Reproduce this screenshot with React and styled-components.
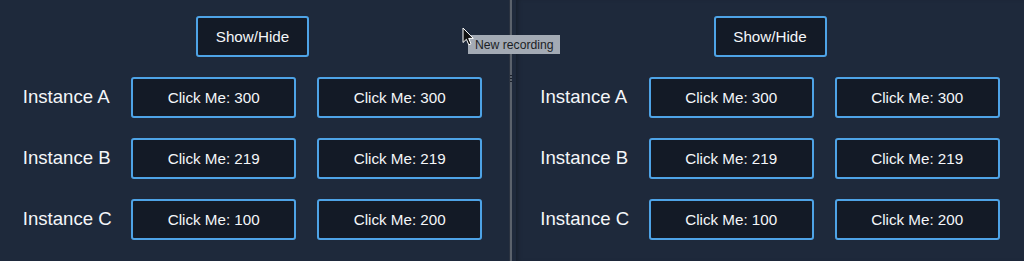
import React from "react";
import styled, { createGlobalStyle } from "styled-components";

const Global = createGlobalStyle`
  html, body { margin: 0; padding: 0; background: #1e293b; }
  body { font-family: "Liberation Sans", Arial, Helvetica, sans-serif; overflow: hidden; }
`;

const Page = styled.div`
  position: relative;
  display: flex;
  width: 1024px;
  height: 261px;
  background: #1e293b;
  overflow: hidden;
`;

const Pane = styled.div`
  flex: 0 0 ${(p) => p.$w}px;
  display: flex;
  flex-direction: column;
  align-items: center;
  padding-top: 16px;
  gap: 20px;
  box-sizing: border-box;
  box-shadow: ${(p) => (p.$shade ? "inset 4px 0 4px -2px rgba(0,0,0,0.25)" : "none")};
`;

const Divider = styled.div`
  flex: 0 0 11px;
  display: flex;
  justify-content: center;
`;

const DividerLine = styled.div`
  position: relative;
  width: 3px;
  height: 100%;
  background: #5b626c;
  border-left: 1px solid #2a3240;
  box-sizing: border-box;
  &::after {
    content: "";
    position: absolute;
    left: 0;
    top: 75px;
    width: 2px;
    height: 8px;
    background: repeating-linear-gradient(
      to bottom,
      #1b212b 0,
      #1b212b 1px,
      #5b626c 1px,
      #5b626c 3px
    );
  }
`;

const Grid = styled.div`
  display: grid;
  grid-template-columns: auto 165px 165px;
  column-gap: 21px;
  row-gap: 20px;
  align-items: center;
`;

const Label = styled.div`
  color: #f4f6f9;
  font-size: 18.6px;
  line-height: 1;
  white-space: nowrap;
  margin-right: -1.5px;
`;

const Button = styled.button`
  width: ${(p) => p.$w}px;
  height: 41px;
  box-sizing: border-box;
  background: #131a26;
  border: 2px solid #4ea3e6;
  border-radius: 3px;
  color: #f4f6f9;
  font-family: "Liberation Sans", Arial, Helvetica, sans-serif;
  font-size: 15.2px;
  padding: 0;
  cursor: pointer;
`;

const Tooltip = styled.div`
  position: absolute;
  left: 468px;
  top: 35px;
  height: 19px;
  padding: 0 6px 0 7px;
  display: flex;
  align-items: center;
  background: #a3aab4;
  color: #1b1f26;
  font-size: 12.2px;
  white-space: nowrap;
`;

const Cursor = styled.svg`
  position: absolute;
  left: 462px;
  top: 27px;
`;

const rows = [
  ["Instance A", 300, 300],
  ["Instance B", 219, 219],
  ["Instance C", 100, 200],
];

function Panel({ w, shade }) {
  return (
    <Pane $w={w} $shade={shade}>
      <Button $w={113}>Show/Hide</Button>
      <Grid>
        {rows.map(([name, a, b]) => (
          <React.Fragment key={name}>
            <Label>{name}</Label>
            <Button $w={165}>Click Me: {a}</Button>
            <Button $w={165}>Click Me: {b}</Button>
          </React.Fragment>
        ))}
      </Grid>
    </Pane>
  );
}

export default function App() {
  return (
    <>
      <Global />
      <Page>
        <Panel w={505} />
        <Divider>
          <DividerLine />
        </Divider>
        <Panel w={508} shade />
        <Tooltip>New recording</Tooltip>
        <Cursor width="13" height="19" viewBox="0 0 13 19">
          <path
            d="M1 1 L1 15.5 L4.4 12.3 L6.8 17.8 L9 16.8 L6.7 11.4 L11.3 11.4 Z"
            fill="#111"
            stroke="#fff"
            strokeWidth="1"
            strokeLinejoin="round"
          />
        </Cursor>
      </Page>
    </>
  );
}
